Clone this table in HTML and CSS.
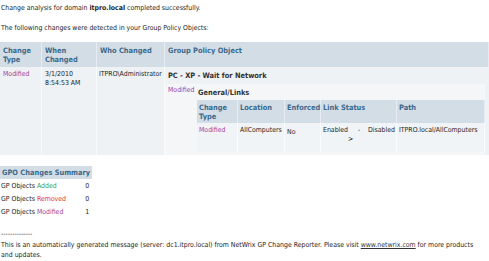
FILE: index.html
```html
<!DOCTYPE html>
<html>
<head>
<meta charset="utf-8">
<link rel="stylesheet" href="styles.css">
</head>
<body>
<p class="intro">Change analysis for domain <b>itpro.local</b> completed successfully.</p>
<p class="intro2">The following changes were detected in your Group Policy Objects:</p>
<table class="main">
  <colgroup><col class="c1"><col class="c2"><col class="c3"><col class="c4"></colgroup>
  <tr class="head">
    <th>Change Type</th><th>When Changed</th><th>Who Changed</th><th>Group Policy Object</th>
  </tr>
  <tr class="body">
    <td class="mod">Modified</td>
    <td>3/1/2010 8:54:53 AM</td>
    <td class="who">ITPRO\Administrator</td>
    <td class="gpo">
      <div class="gponame">PC - XP - Wait for Network</div>
      <div class="section">
        <span class="mod secmod">Modified</span>
        <div class="secbody">
          <div class="sectitle">General/Links</div>
          <table class="inner">
            <colgroup><col class="i1"><col class="i2"><col class="i3"><col class="i4"><col class="i5"></colgroup>
            <tr class="head">
              <th>Change Type</th><th>Location</th><th>Enforced</th><th>Link Status</th><th>Path</th>
            </tr>
            <tr class="ibody">
              <td class="mod">Modified</td>
              <td>AllComputers</td>
              <td class="no">No</td>
              <td class="status">Enabled &nbsp;&nbsp;&nbsp; - &nbsp;&nbsp; Disabled<br><span class="arrow">&gt;</span></td>
              <td>ITPRO.local/AllComputers</td>
            </tr>
          </table>
        </div>
      </div>
    </td>
  </tr>
</table>

<table class="summary">
  <tr class="head"><th colspan="2">GPO Changes Summary</th></tr>
  <tr><td>GP Objects <span class="add">Added</span></td><td class="num">0</td></tr>
  <tr><td>GP Objects <span class="rem">Removed</span></td><td class="num">0</td></tr>
  <tr><td>GP Objects <span class="mod">Modified</span></td><td class="num">1</td></tr>
</table>

<div class="footer">
  <div class="dashes">--------------</div>
  <p>This is an automatically generated message (server: dc1.itpro.local) from NetWrix GP Change Reporter. Please visit <a href="#">www.netwrix.com</a> for more products and updates.</p>
</div>
</body>
</html>
```
FILE: styles.css
```css
html, body {
  margin: 0;
  padding: 0;
  background: #fff;
}
body {
  font-family: "DejaVu Sans Condensed", "DejaVu Sans", sans-serif;
  font-size: 6.9px;
  line-height: 9px;
  color: #222;
  padding-left: 1px;
}
p { margin: 0; }
.intro { padding-top: 4px; }
.intro2 { margin-top: 11px; }
b { font-weight: bold; }

table { border-collapse: separate; border-spacing: 0; }
.main {
  width: 489px;
  margin-top: 9px;
  margin-left: -1px;
  table-layout: fixed;
}
.c1 { width: 42px; }
.c2 { width: 55px; }
.c3 { width: 68px; }
.c4 { width: 324px; }

.head th {
  background: #d3dde6;
  color: #3b6a8c;
  font-weight: bold;
  text-align: left;
  vertical-align: top;
  font-size: 7.4px;
  line-height: 9px;
}
.main > tbody > .head > th {
  padding: 4px 3px 3px 3px;
  height: 15px;
  border-right: 1px solid #e6ecf1;
}
.main > tbody > .body > td {
  background: #eef2f5;
  vertical-align: top;
  padding: 3px 3px;
  height: 79px;
  border-right: 1px solid #f8fafb;
}
.main > tbody > .body > td.who { padding-left: 2px; padding-right: 0; white-space: nowrap; }
.main > tbody > .body > td.gpo {
  padding: 0;
  border-right: none;
}
.mod { color: #9b3f9e; }
.add { color: #3f9a3a; }
.rem { color: #e2342d; }

.gponame {
  font-weight: bold;
  font-size: 7.4px;
  color: #333;
  padding: 4px 0 4px 3px;
  background: #eef2f5;
}
.section {
  display: flex;
  background: #f4f6f8;
  padding: 1px 0 3px 3px;
  margin-right: 4px;
}
.secmod {
  width: 29px;
  flex: none;
  padding-top: 1px;
}
.secbody { flex: 1; }
.sectitle {
  font-weight: bold;
  font-size: 7.4px;
  color: #333;
  padding: 3px 0 3px 1px;
}
.inner { width: 288px; table-layout: fixed; }
.i1 { width: 41px; }
.i2 { width: 47px; }
.i3 { width: 36px; }
.i4 { width: 76px; }
.i5 { width: 88px; }
.inner .head th {
  padding: 3px 2px 2px 2px;
  height: 17px;
  border-right: 1px solid #e6ecf1;
}
.inner .ibody td {
  background: #f1f4f6;
  vertical-align: top;
  padding: 3px 2px 2px 2px;
  height: 22px;
  border-right: 1px solid #fafbfc;
  white-space: nowrap;
}
.inner .ibody td.no { padding-top: 5px; }
.arrow { display: inline-block; padding-left: 25px; }

.summary {
  margin-top: 11px;
  margin-left: -1px;
  width: 91px;
}
.summary .head th {
  padding: 2px 2px 2px 2px;
  height: 9px;
  white-space: nowrap;
}
.summary td {
  padding: 3px 1px 1px 1px;
  height: 9px;
  white-space: nowrap;
}
.summary td.num { text-align: right; padding-right: 3px; }

.footer { margin-top: 14px; }
.dashes { line-height: 5px; height: 8px; }
.footer p { line-height: 10px; width: 482px; }
a { color: #333; text-decoration: underline; }
```
